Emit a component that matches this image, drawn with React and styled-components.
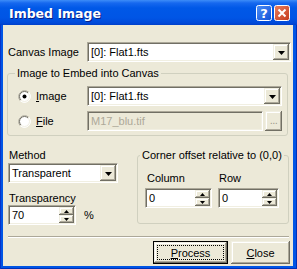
import React from "react";
import styled, { createGlobalStyle, css } from "styled-components";

const GlobalStyle = createGlobalStyle`
  html, body {
    margin: 0;
    padding: 0;
    background: #ffffff;
  }
  body {
    font-family: "Liberation Sans", Arial, sans-serif;
    font-size: 11px;
    color: #000;
  }
`;

const sunken = css`
  box-sizing: border-box;
  border: 1px solid;
  border-color: #aca899 #ffffff #ffffff #aca899;
  box-shadow: inset 1px 1px 0 #716f64, inset -1px -1px 0 #f1efe2;
  padding: 1px;
`;

const raised = css`
  box-sizing: border-box;
  background: #ece9d8;
  box-shadow: inset -1px -1px 0 #716f64, inset 1px 1px 0 #f1efe2,
    inset -2px -2px 0 #aca899, inset 2px 2px 0 #ffffff;
`;

const Window = styled.div`
  width: 297px;
  height: 269px;
  display: flex;
  flex-direction: column;
`;

const TitleBar = styled.div`
  height: 25px;
  flex: none;
  display: flex;
  align-items: center;
  padding: 0 7px 0 9px;
  box-sizing: border-box;
  background: linear-gradient(
    180deg,
    #3d8df8 0px,
    #1668ef 3px,
    #0058e7 8px,
    #0055e5 18px,
    #0049d9 23px,
    #003fc8 25px
  );
`;

const Title = styled.div`
  flex: 1;
  color: #fff;
  font-family: "DejaVu Sans", sans-serif;
  font-weight: bold;
  font-size: 12.5px;
  text-shadow: 1px 1px 0 #0a1e86;
  margin-top: 1px;
`;

const CaptionButtons = styled.div`
  display: flex;
  gap: 2px;
  margin-top: 1px;
`;

const Frame = styled.div`
  flex: 1;
  display: flex;
  padding: 0 4px 3px 3px;
  background: #0055e5;
  box-shadow: inset 1px 0 0 #0832c8, inset -1px -1px 0 #0030b8;
`;

const Client = styled.div`
  flex: 1;
  background: #ece9d8;
  display: flex;
  flex-direction: column;
`;

const CanvasRow = styled.div`
  display: flex;
  align-items: center;
  height: 20px;
  margin-top: 17px;
  padding: 0 2px 0 5px;
`;

const RowLabel = styled.span`
  flex: 1;
`;

const Combo = styled.div`
  ${sunken}
  width: ${(p) => p.$w}px;
  height: 20px;
  flex: none;
  background: #fff;
  display: flex;
`;

const ComboText = styled.span`
  flex: 1;
  display: flex;
  align-items: center;
  padding-left: 2px;
  white-space: nowrap;
  overflow: hidden;
`;

const ComboButton = styled.span`
  ${raised}
  width: 16px;
  display: flex;
  align-items: center;
  justify-content: center;
  padding-top: 1px;
`;

const Group = styled.div`
  position: relative;
  box-sizing: border-box;
  border: 1px solid #d0d0bf;
  border-radius: 3px;
`;

const EmbedGroup = styled(Group)`
  margin: 11px 5px 0 4px;
  height: 63px;
  padding: 12px 0 0 10px;
`;

const Legend = styled.span`
  position: absolute;
  top: -8px;
  left: ${(p) => p.$left}px;
  padding: 0 2px;
  background: #ece9d8;
  line-height: 14px;
  white-space: nowrap;
`;

const OptionRow = styled.div`
  display: flex;
  align-items: center;
  height: 20px;
  & + & {
    margin-top: 5px;
  }
`;

const RadioOption = styled.label`
  width: 69px;
  display: flex;
  align-items: center;
  gap: 5px;
`;

const DisabledEdit = styled.div`
  ${sunken}
  width: 176px;
  height: 20px;
  display: flex;
  align-items: center;
  padding-left: 3px;
  color: #aca899;
  background: #ece9d8;
`;

const BrowseButton = styled.span`
  ${raised}
  width: 17px;
  height: 20px;
  margin-left: 2px;
  display: flex;
  align-items: flex-end;
  justify-content: center;
  padding-bottom: 5px;
  color: #9d9a8c;
  font-size: 11px;
  line-height: 11px;
  letter-spacing: -0.5px;
`;

const Middle = styled.div`
  display: flex;
  margin-top: 12px;
  padding: 0 4px 0 5px;
`;

const LeftCol = styled.div`
  width: 110px;
  display: flex;
  flex-direction: column;
`;

const FieldLabel = styled.div`
  line-height: 14px;
  margin-top: ${(p) => p.$top || 0}px;
  margin-left: ${(p) => p.$indent || 0}px;
`;

const ComboSpacer = styled.div`
  margin-top: 1px;
`;

const TransRow = styled.div`
  display: flex;
  align-items: center;
`;

const SpinEdit = styled.div`
  ${sunken}
  width: ${(p) => p.$w}px;
  height: 20px;
  background: #fff;
  display: flex;
  margin-top: ${(p) => p.$top || 0}px;
`;

const SpinText = styled.span`
  flex: 1;
  display: flex;
  align-items: center;
  padding-left: 2px;
`;

const Spinner = styled.span`
  width: 15px;
  display: flex;
  flex-direction: column;
`;

const SpinButton = styled.span`
  ${raised}
  flex: 1;
  display: flex;
  align-items: center;
  justify-content: center;
`;

const Percent = styled.span`
  margin-left: 8px;
`;

const CornerGroup = styled(Group)`
  margin: 7px 0 0 auto;
  width: 152px;
  height: 69px;
  padding: 15px 0 0 7px;
  display: flex;
  gap: 6px;
`;

const FieldCol = styled.div`
  display: flex;
  flex-direction: column;
`;

const Separator = styled.div`
  margin: 11px 4px 0 5px;
  border-top: 1px solid #aca899;
  border-bottom: 1px solid #ffffff;
`;

const ButtonRow = styled.div`
  display: flex;
  justify-content: flex-end;
  gap: 3px;
  margin-top: 3px;
  padding-right: 3px;
`;

const PushButton = styled.div`
  ${raised}
  width: ${(p) => p.$w}px;
  height: 23px;
  display: flex;
  align-items: stretch;
  justify-content: stretch;
  padding: 3px;
  ${(p) =>
    p.$default &&
    css`
      border: 1px solid #000;
    `}
`;

const ButtonFace = styled.span`
  flex: 1;
  display: flex;
  align-items: center;
  justify-content: center;
  border: 1px dotted ${(p) => (p.$focus ? "#000" : "transparent")};
`;

function DownArrow() {
  return (
    <svg width="7" height="4" viewBox="0 0 7 4">
      <polygon points="0,0 7,0 3.5,4" fill="#000" />
    </svg>
  );
}

function SmallArrow({ up }) {
  return (
    <svg width="5" height="3" viewBox="0 0 5 3">
      <polygon points={up ? "2.5,0 5,3 0,3" : "0,0 5,0 2.5,3"} fill="#000" />
    </svg>
  );
}

function Radio({ checked }) {
  return (
    <svg width="13" height="13" viewBox="0 0 13 13">
      <circle cx="6.5" cy="6.5" r="6" fill="#fff" />
      <path d="M10.74 2.26 A6 6 0 0 0 2.26 10.74" stroke="#aca899" fill="none" />
      <path d="M2.26 10.74 A6 6 0 0 0 10.74 2.26" stroke="#ffffff" fill="none" />
      <path d="M10.04 2.96 A5 5 0 0 0 2.96 10.04" stroke="#716f64" fill="none" />
      <path d="M2.96 10.04 A5 5 0 0 0 10.04 2.96" stroke="#f1efe2" fill="none" />
      {checked && <circle cx="6.5" cy="6.5" r="2" fill="#000" />}
    </svg>
  );
}

function HelpIcon() {
  return (
    <svg width="16" height="16" viewBox="0 0 16 16">
      <defs>
        <linearGradient id="hb" x1="0" y1="0" x2="1" y2="1">
          <stop offset="0" stopColor="#4d8ff7" />
          <stop offset="1" stopColor="#1150d6" />
        </linearGradient>
      </defs>
      <rect x="0.5" y="0.5" width="15" height="15" rx="2" fill="url(#hb)" stroke="#fff" />
      <text
        x="8"
        y="13"
        textAnchor="middle"
        fill="#fff"
        fontFamily="DejaVu Sans, sans-serif"
        fontWeight="bold"
        fontSize="13"
      >
        ?
      </text>
    </svg>
  );
}

function CloseIcon() {
  return (
    <svg width="16" height="16" viewBox="0 0 16 16">
      <defs>
        <linearGradient id="cb" x1="0" y1="0" x2="1" y2="1">
          <stop offset="0" stopColor="#e9805f" />
          <stop offset="1" stopColor="#c4391b" />
        </linearGradient>
      </defs>
      <rect x="0.5" y="0.5" width="15" height="15" rx="2" fill="url(#cb)" stroke="#fff" />
      <path d="M4.5 4.5 L11.5 11.5 M11.5 4.5 L4.5 11.5" stroke="#fff" strokeWidth="2" />
    </svg>
  );
}

function Spin({ w, value, top }) {
  return (
    <SpinEdit $w={w} $top={top}>
      <SpinText>{value}</SpinText>
      <Spinner>
        <SpinButton>
          <SmallArrow up />
        </SpinButton>
        <SpinButton>
          <SmallArrow />
        </SpinButton>
      </Spinner>
    </SpinEdit>
  );
}

function ComboBox({ w, value }) {
  return (
    <Combo $w={w}>
      <ComboText>{value}</ComboText>
      <ComboButton>
        <DownArrow />
      </ComboButton>
    </Combo>
  );
}

export default function App() {
  return (
    <>
      <GlobalStyle />
      <Window>
        <TitleBar>
          <Title>Imbed Image</Title>
          <CaptionButtons>
            <HelpIcon />
            <CloseIcon />
          </CaptionButtons>
        </TitleBar>
        <Frame>
          <Client>
            <CanvasRow>
              <RowLabel>Canvas Image</RowLabel>
              <ComboBox w={204} value="[0]: Flat1.fts" />
            </CanvasRow>

            <EmbedGroup>
              <Legend $left={7}>Image to Embed into Canvas</Legend>
              <OptionRow>
                <RadioOption>
                  <Radio checked />
                  <span>
                    <u>I</u>mage
                  </span>
                </RadioOption>
                <ComboBox w={195} value="[0]: Flat1.fts" />
              </OptionRow>
              <OptionRow>
                <RadioOption>
                  <Radio />
                  <span>
                    <u>F</u>ile
                  </span>
                </RadioOption>
                <DisabledEdit>M17_blu.tif</DisabledEdit>
                <BrowseButton>...</BrowseButton>
              </OptionRow>
            </EmbedGroup>

            <Middle>
              <LeftCol>
                <FieldLabel $indent={1}>Method</FieldLabel>
                <ComboSpacer>
                  <ComboBox w={110} value="Transparent" />
                </ComboSpacer>
                <FieldLabel $top={8} $indent={1}>
                  Transparency
                </FieldLabel>
                <TransRow>
                  <Spin w={68} value="70" />
                  <Percent>%</Percent>
                </TransRow>
              </LeftCol>

              <CornerGroup>
                <Legend $left={2}>Corner offset relative to (0,0)</Legend>
                <FieldCol>
                  <FieldLabel $indent={2}>Column</FieldLabel>
                  <Spin w={67} value="0" top={3} />
                </FieldCol>
                <FieldCol>
                  <FieldLabel $indent={1}>Row</FieldLabel>
                  <Spin w={61} value="0" top={3} />
                </FieldCol>
              </CornerGroup>
            </Middle>

            <Separator />

            <ButtonRow>
              <PushButton $w={75} $default>
                <ButtonFace $focus>
                  <span>
                    <u>P</u>rocess
                  </span>
                </ButtonFace>
              </PushButton>
              <PushButton $w={59}>
                <ButtonFace>
                  <span>
                    <u>C</u>lose
                  </span>
                </ButtonFace>
              </PushButton>
            </ButtonRow>
          </Client>
        </Frame>
      </Window>
    </>
  );
}
